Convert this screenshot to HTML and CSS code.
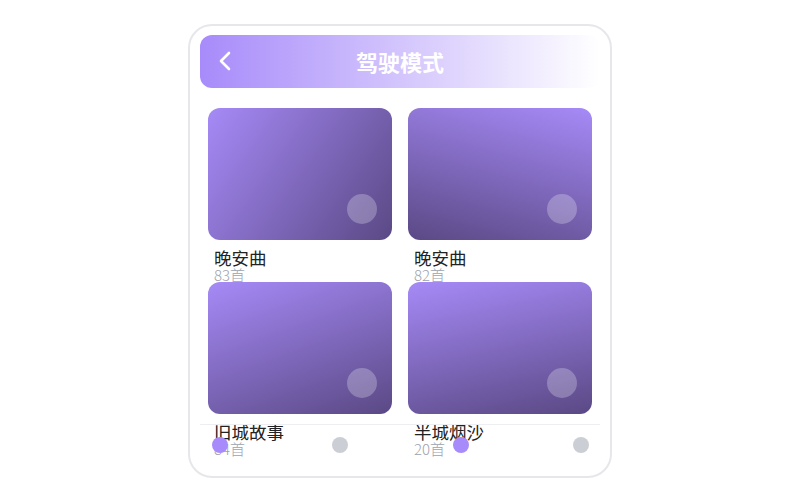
FILE: index.html
```html
<!DOCTYPE html>
<html lang="zh">

<head>
    <meta charset="UTF-8">
    <meta name="viewport" content="width=device-width, initial-scale=1.0">
    <title>驾驶模式</title>
    <link rel="stylesheet" href="styles.css">
</head>

<body>
    <div class="telefono">
        <div class="cabecera">
            <button class="btn-atras">
                <svg width="14" height="22" viewBox="0 0 14 22">
                    <path d="M11 3 L3 11 L11 19" fill="none" stroke="#fff" stroke-width="2.6" stroke-linecap="round" stroke-linejoin="round"/>
                </svg>
            </button>
            <h1>驾驶模式</h1>
        </div>

        <div class="lista">
            <div class="item">
                <div class="portada portada1"><span class="circulo"></span></div>
                <div class="info">
                    <p class="nombre">晚安曲</p>
                    <p class="cantidad">83首</p>
                </div>
            </div>
            <div class="item">
                <div class="portada portada2"><span class="circulo"></span></div>
                <div class="info">
                    <p class="nombre">晚安曲</p>
                    <p class="cantidad">82首</p>
                </div>
            </div>
            <div class="item">
                <div class="portada portada3"><span class="circulo"></span></div>
                <div class="info">
                    <p class="nombre">旧城故事</p>
                    <p class="cantidad">84首</p>
                </div>
            </div>
            <div class="item">
                <div class="portada portada4"><span class="circulo"></span></div>
                <div class="info">
                    <p class="nombre">半城烟沙</p>
                    <p class="cantidad">20首</p>
                </div>
            </div>
        </div>

        <div class="barraInferior">
            <span class="punto activo"></span>
            <span class="punto"></span>
            <span class="punto activo"></span>
            <span class="punto"></span>
        </div>
    </div>
</body>

</html>
```

FILE: styles.css
```css
* {
    margin: 0;
    padding: 0;
    box-sizing: border-box;
}

body {
    height: 100vh;
    display: flex;
    justify-content: center;
    align-items: center;
    background-color: white;
    font-family: "Noto Sans CJK SC", "Noto Sans", sans-serif;
}

.telefono {
    width: 424px;
    height: 454px;
    margin-top: 1px;
    border: 2px solid #e6e7eb;
    border-radius: 24px;
    padding: 9px 10px 10px;
    position: relative;
    overflow: hidden;
}

.cabecera {
    height: 53px;
    border-radius: 12px;
    background: linear-gradient(90deg, #a78bfa, #ffffff);
    display: flex;
    align-items: center;
    position: relative;
}

.btn-atras {
    width: 14px;
    height: 22px;
    margin-left: 18px;
    border: 0;
    background-color: transparent;
    display: flex;
}

.cabecera h1 {
    position: absolute;
    left: 0;
    right: 0;
    text-align: center;
    color: white;
    font-size: 22px;
    font-weight: 700;
    line-height: 53px;
}

.lista {
    display: grid;
    grid-template-columns: 1fr 1fr;
    grid-auto-rows: 174px;
    column-gap: 16px;
    padding: 0 8px;
    margin-top: 20px;
}

.portada {
    height: 132px;
    border-radius: 12px;
    position: relative;
}

.portada1 {
    background: linear-gradient(125deg, #a68af7, #5a4985);
}

.portada2 {
    background: linear-gradient(195deg, #a68af7, #5a4985);
}

.portada3 {
    background: linear-gradient(160deg, #a68af7, #5a4985);
}

.portada4 {
    background: linear-gradient(168deg, #a68af7, #5a4985);
}

.circulo {
    position: absolute;
    right: 15px;
    bottom: 16px;
    width: 30px;
    height: 30px;
    border-radius: 50%;
    background: rgba(255, 255, 255, 0.25);
}

.info {
    padding: 9px 6px 0;
}

.nombre {
    font-size: 17.5px;
    font-weight: 400;
    line-height: 18px;
    color: #222;
}

.cantidad {
    font-size: 15px;
    font-weight: 300;
    line-height: 15px;
    color: #9ca3af;
}

.barraInferior {
    position: absolute;
    left: 10px;
    right: 10px;
    bottom: 10px;
    height: 42px;
    border-top: 1px solid #eceef1;
    display: flex;
    justify-content: space-between;
    align-items: center;
    padding: 0 11px 0 12px;
}

.punto {
    width: 16px;
    height: 16px;
    border-radius: 50%;
    background: #cbcfd5;
}

.punto.activo {
    background: #a78bfa;
}
```
